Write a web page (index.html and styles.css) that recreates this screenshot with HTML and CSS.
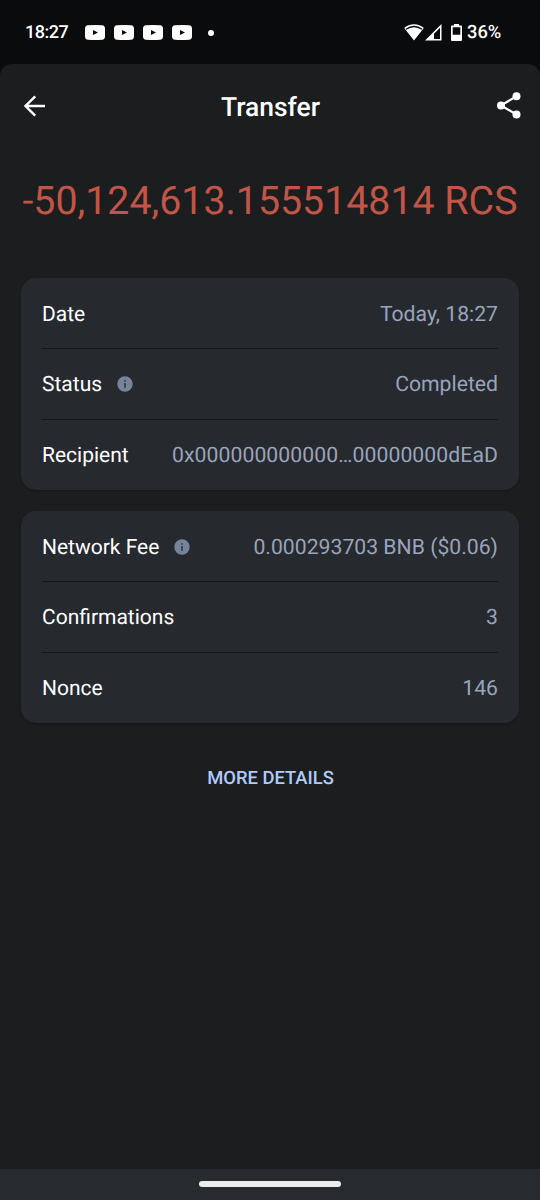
FILE: index.html
```html
<!DOCTYPE html>
<html lang="en">
<head>
<meta charset="utf-8">
<title>Transfer</title>
<link rel="stylesheet" href="styles.css">
</head>
<body>
<svg class="defs" aria-hidden="true">
  <symbol id="video" viewBox="0 0 20 15">
    <path fill="#fff" d="M3 .3Q10-.2 17 .3Q20 .5 20 3.5V11.5Q20 14.5 17 14.7Q10 15.2 3 14.7Q0 14.5 0 11.5V3.5Q0 .5 3 .3Z"/>
    <path fill="#0a0b0d" d="M8 4.9v5.2l5-2.6z"/>
  </symbol>
  <symbol id="info" viewBox="0 0 16 16">
    <circle cx="8" cy="8" r="7.7" fill="#76849b"/>
    <path fill="#26292e" d="M7.3 4.200h1.400v1.500H7.300zM7.300 7h1.400v4.800H7.300z"/>
  </symbol>
</svg>
<div class="phone">
  <div class="status-bar">
    <span class="clock">18:27</span>
    <div class="notifications">
      <svg><use href="#video"/></svg>
      <svg><use href="#video"/></svg>
      <svg><use href="#video"/></svg>
      <svg><use href="#video"/></svg>
    </div>
    <span class="dot"></span>
    <div class="system">
      <svg class="wifi" viewBox="0 0 20 17"><path fill="#fff" d="M10 .3C6.100.3 2.600 1.700.200 4L10 16.600 19.800 4C17.400 1.700 13.900.3 10 .3z"/><path fill="none" stroke="#0a0b0d" stroke-width="1.300" d="M2 5.300Q10-.300 18 5.300"/></svg>
      <svg class="signal" viewBox="0 0 17 17"><path fill="#fff" fill-rule="evenodd" d="M16.500 0V16.500H0zM15 3.700 9 9.700V15h6z"/></svg>
      <svg class="battery" viewBox="0 0 11 17"><path fill="#fff" fill-rule="evenodd" d="M3 0h5v1.500h2Q11 1.500 11 2.500V16Q11 17 10 17H1Q0 17 0 16V2.500Q0 1.500 1 1.500h2zM1.700 3.300v7.400h7.600V3.300z"/></svg>
      <span class="percent">36%</span>
    </div>
  </div>
  <main class="screen">
    <header class="toolbar">
      <svg class="back" viewBox="0 0 22 22"><path fill="none" stroke="#fff" stroke-width="2.400" d="M21 11H2M11.200 1.300 1.500 11l9.700 9.700"/></svg>
      <h1 class="title">Transfer</h1>
      <svg class="share" viewBox="0 0 24 27"><path fill="none" stroke="#fff" stroke-width="2.200" d="M19.500 4.300 4 13.400l15.500 9.100"/><g fill="#fff"><circle cx="19.500" cy="4.300" r="4"/><circle cx="4" cy="13.400" r="4"/><circle cx="19.500" cy="22.500" r="4"/></g></svg>
    </header>
    <div class="amount">-50,124,613.155514814 RCS</div>
    <section class="card">
      <div class="row"><span class="label">Date</span><span class="value">Today, 18:27</span></div>
      <div class="row"><span class="label">Status</span><svg class="info"><use href="#info"/></svg><span class="value">Completed</span></div>
      <div class="row"><span class="label">Recipient</span><span class="value address">0x000000000000…00000000dEaD</span></div>
    </section>
    <section class="card">
      <div class="row"><span class="label">Network Fee</span><svg class="info"><use href="#info"/></svg><span class="value">0.000293703 BNB ($0.06)</span></div>
      <div class="row"><span class="label">Confirmations</span><span class="value">3</span></div>
      <div class="row"><span class="label">Nonce</span><span class="value">146</span></div>
    </section>
    <div class="more">MORE DETAILS</div>
  </main>
  <footer class="nav-bar"><span class="handle"></span></footer>
</div>
</body>
</html>
```
FILE: styles.css
```css
* { box-sizing: border-box; }
body { margin: 0; background: #0a0b0d; font-family: Roboto, "Liberation Sans", sans-serif; color: #fff; text-rendering: geometricPrecision; }
svg { display: block; flex: none; }
.defs { position: absolute; width: 0; height: 0; }
.phone { width: 540px; height: 1200px; display: flex; flex-direction: column; overflow: hidden; }
.status-bar { height: 64px; flex: none; display: flex; align-items: center; padding: 1px 38px 0 25px; }
.clock { width: 60px; font-size: 18px; font-weight: 500; letter-spacing: -.5px; white-space: nowrap; }
.notifications { display: flex; gap: 9px; }
.notifications svg { width: 20px; height: 15px; }
.dot { width: 6px; height: 6px; margin-left: 16px; border-radius: 50%; background: #fff; }
.system { display: flex; align-items: center; margin-left: auto; }
.wifi { width: 20px; height: 17px; }
.signal { width: 17px; height: 17px; margin-left: 1px; }
.battery { width: 11px; height: 17px; margin-left: 9px; }
.percent { width: 35px; margin-left: 5px; font-size: 18.3px; font-weight: 500; white-space: nowrap; }
.screen { flex: 1; display: flex; flex-direction: column; background: #1c1d1f; border-radius: 12px 12px 0 0; }
.toolbar { height: 84px; flex: none; display: flex; align-items: center; justify-content: space-between; padding: 0 19px 0 24px; }
.back { width: 22px; height: 22px; }
.share { width: 24px; height: 27px; margin-top: -2px; }
.title { margin: 3px 2px 0 0; font-size: 26.4px; font-weight: 500; line-height: 30px; }
.amount { height: 130px; flex: none; padding-top: 29px; font-size: 39.3px; line-height: 48px; text-align: center; color: #c15548; white-space: nowrap; }
.card { height: 212px; flex: none; display: grid; grid-template-rows: 70px 71px 71px; margin: 0 21px 21px; padding: 0 21px; background: #26292e; border-radius: 15px; box-shadow: 0 1px 2px #151618; }
.row { display: flex; align-items: center; padding-top: 4px; font-size: 21.2px; line-height: 28px; white-space: nowrap; }
.row + .row { padding-top: 2px; border-top: 1px solid #15171a; }
.label { font-size: 21px; }
.value { margin-left: auto; color: #99a4bb; }
.address { letter-spacing: .07px; }
.info { width: 16px; height: 16px; margin: -3px 0 0 14.500px; }
.more { margin: 22px 0 0 1px; font-size: 18.4px; font-weight: 500; line-height: 26px; text-align: center; color: #b0cbfb; }
.nav-bar { height: 31px; flex: none; display: flex; justify-content: center; padding-top: 12px; background: #272a2e; }
.handle { width: 142px; height: 6px; border-radius: 3px; background: #ececed; }
```
